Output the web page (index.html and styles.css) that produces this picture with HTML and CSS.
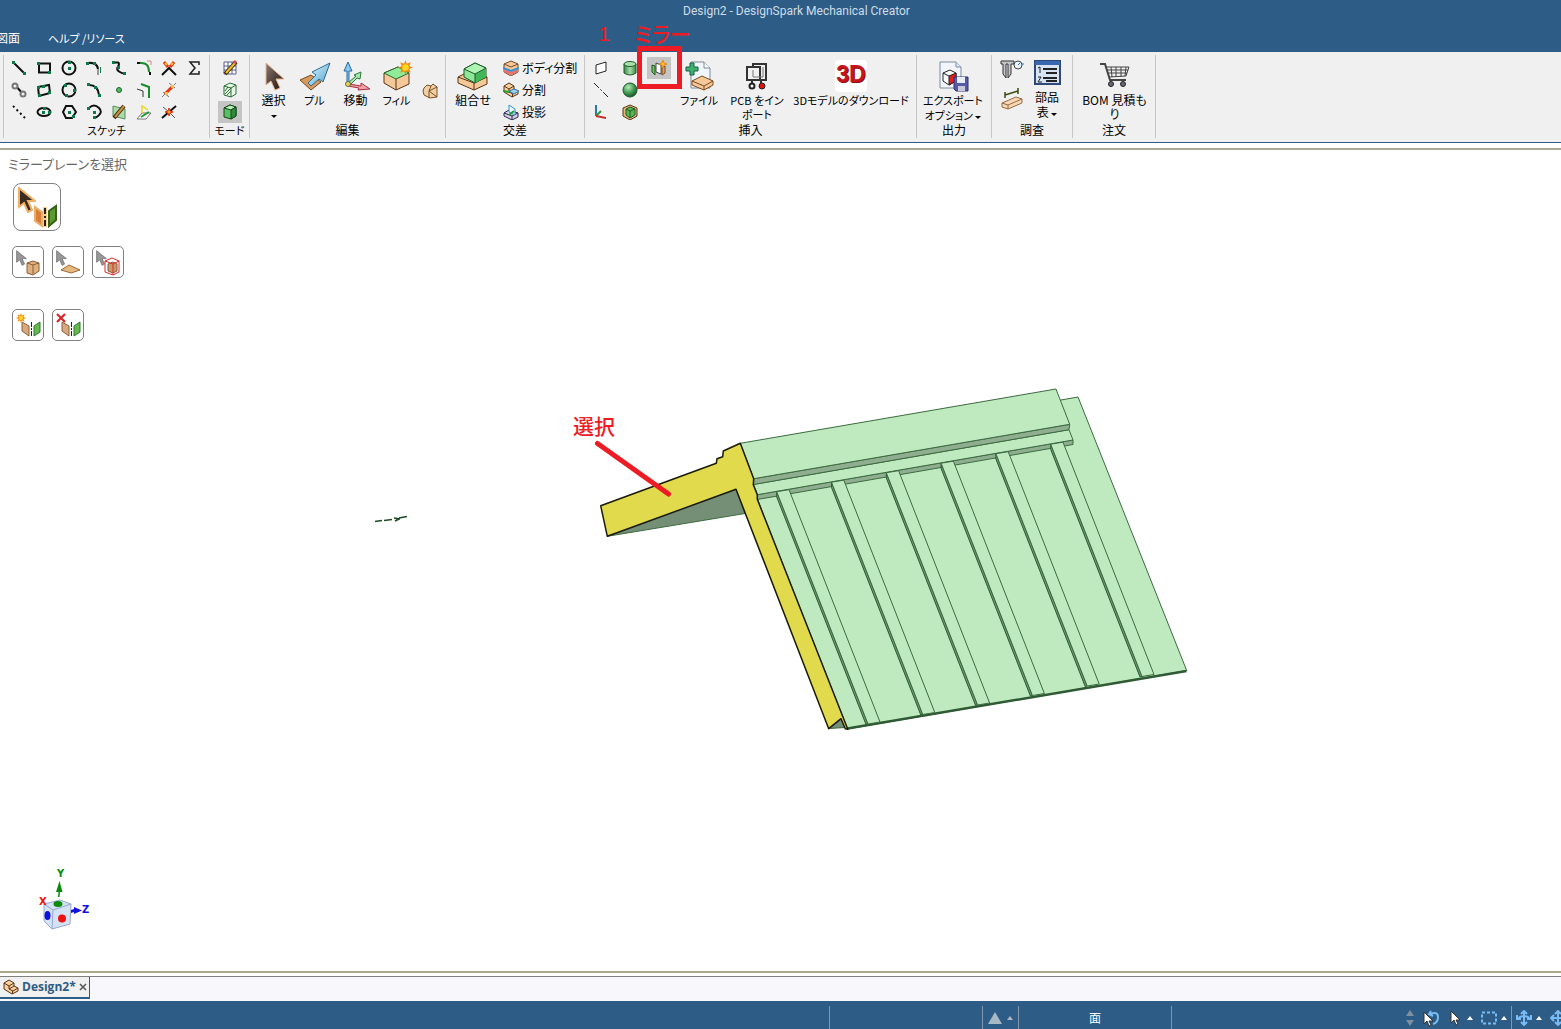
FILE: index.html
```html
<!DOCTYPE html>
<html lang="ja">
<head>
<meta charset="utf-8">
<title>Design2 - DesignSpark Mechanical Creator</title>
<link rel="stylesheet" href="styles.css">
</head>
<body>
<svg class="defs" aria-hidden="true">
  <defs>
    <linearGradient id="gArrow" x1="0" y1="0" x2="1" y2="1"><stop offset="0" stop-color="#8a7c74"/><stop offset="1" stop-color="#1c0e08"/></linearGradient>
    <linearGradient id="gBlue" x1="0" y1="0" x2="1" y2="1"><stop offset="0" stop-color="#e8fbff"/><stop offset="1" stop-color="#4aa0d0"/></linearGradient>
    <radialGradient id="gBall" cx=".38" cy=".3" r=".7"><stop offset="0" stop-color="#b8eab8"/><stop offset=".6" stop-color="#3f9a52"/><stop offset="1" stop-color="#1d5a2c"/></radialGradient>
    <linearGradient id="gCyl"><stop offset="0" stop-color="#3a8a4a"/><stop offset=".5" stop-color="#a5dca8"/><stop offset="1" stop-color="#3a8a4a"/></linearGradient>
    <symbol id="sun" viewBox="0 0 14 14"><path d="M7 0l1.200 3.600L11.900 2l-1.400 3.600L14 7l-3.500 1.300 1.400 3.700-3.700-1.500L7 14l-1.300-3.500L2 12l1.500-3.700L0 7l3.500-1.400L2 2l3.700 1.600z" fill="#f08a10"/><circle cx="7" cy="7" r="3" fill="#ffd820"/></symbol>
    <symbol id="cursor" viewBox="0 0 18 26"><path d="M1 1v19l5-4 4 9 4-2-4-9h7z"/></symbol>
    <symbol id="step" viewBox="0 0 16 16"><path d="M1 4l5-3 5 3v3l4 2v3l-6 3-8-5z" fill="#f7cfa0" stroke="#5a3414"/><path d="M1 4l5 3 5-3M6 7v3l4 2 5-3M6 10l5-3M9.500 12v3" fill="none" stroke="#5a3414"/></symbol>
    <g id="rib"><path d="M776.700 491.700L868 724l-2 .5L776.700 497z" fill="#6b9a70" stroke="#2f5a34"/><path d="M776.700 491.700l12.300-2L880 722l-12 2z" fill="#bfeac0" stroke="#3c6a40"/></g>
  </defs>
</svg>

<header class="top">
  <h1 class="title">Design2 - DesignSpark Mechanical Creator</h1>
  <nav class="menu">
    <button type="button">図面</button>
    <button type="button" class="kana">ヘルプ /リソース</button>
  </nav>
</header>

<section class="ribbon" aria-label="リボン">
  <div class="group g-sketch">
    <div class="grid">
      <button type="button" aria-label="線"><svg viewBox="0 0 16 16"><path class="k" d="M3 3l11 11"/><path class="nd" d="M1 1h3v3H1zM12 12h3v3h-3z"/></svg></button>
      <button type="button" aria-label="長方形"><svg viewBox="0 0 16 16"><path class="k" d="M3 3.500h11v9H3z"/><path class="nd" d="M1 2h3v3H1zM12 11h3v3h-3z"/></svg></button>
      <button type="button" aria-label="円"><svg viewBox="0 0 16 16"><circle class="k" cx="8" cy="8" r="6.500"/><path class="nd" d="M7 7h3v3H7zM7 1h3v3H7z"/></svg></button>
      <button type="button" aria-label="接線円弧"><svg viewBox="0 0 16 16"><path class="k" d="M2 3q9-1 10 6"/><path d="M12 9v6" stroke="#999" stroke-width="2"/><path class="nd" d="M0 2h3v3H0zM7 2h3v3H7zM14 7h1v6h-1z"/></svg></button>
      <button type="button" aria-label="スプライン"><svg viewBox="0 0 16 16"><path class="k" d="M2 2.500h5q2 1 0 4t1 5 6 2"/><path class="nd" d="M1 1h3v3H1zM6 6h3v3H6zM12 12h3v3h-3z"/></svg></button>
      <button type="button" aria-label="丸み"><svg viewBox="0 0 16 16"><path d="M4 3q9-1 9 9" fill="none" stroke="#1a8a2a" stroke-width="2"/><path class="k" d="M1 3h3M14 12v3"/><path d="M11 1h4v4" fill="none" stroke="#c88"/></svg></button>
      <button type="button" aria-label="トリム"><svg viewBox="0 0 16 16"><path class="k" d="M1 15L8 8l7 7"/><path d="M3 2l4 5M13 2L9 7" stroke="#e83010" stroke-width="3"/><path d="M4 3l2 2M12 3l-2 2" stroke="#ffc030" stroke-width="2"/></svg></button>
      <button type="button" aria-label="方程式"><svg viewBox="0 0 16 16"><path d="M13 5V2H4l5 6-5 6h9v-3" fill="none" stroke="#222" stroke-width="1.500"/></svg></button>

      <button type="button" aria-label="接線"><svg viewBox="0 0 16 16"><path class="k" d="M5 4l6 7"/><circle class="gr" cx="4" cy="4" r="2.500"/><circle class="gr" cx="12" cy="12" r="2.500"/></svg></button>
      <button type="button" aria-label="三点長方形"><svg viewBox="0 0 16 16"><path class="k" d="M2 5l11-2 1 8-11 3z"/><path class="nd" d="M1 4h3v3H1zM6 3h3v3H6zM12 9h3v3h-3zM2 12h3v3H2z"/></svg></button>
      <button type="button" aria-label="三点円"><svg viewBox="0 0 16 16"><circle class="k" cx="8" cy="8" r="6.500"/><path class="nd" d="M3 2h3v3H3zM12 7h3v3h-3zM4 12h3v3H4z"/></svg></button>
      <button type="button" aria-label="三点円弧"><svg viewBox="0 0 16 16"><path class="k" d="M3 3q9 0 10 10"/><path class="nd" d="M1 1h3v3H1zM8 4h3v3H8zM12 12h3v3h-3z"/></svg></button>
      <button type="button" aria-label="点"><svg viewBox="0 0 16 16"><circle cx="8" cy="8" r="2.500" fill="#58b868" stroke="#186828"/></svg></button>
      <button type="button" aria-label="オフセット"><svg viewBox="0 0 16 16"><path d="M5 2l8 3v11" fill="none" stroke="#1a8a2a" stroke-width="2"/><path d="M1 7l6 2v6" fill="none" stroke="#333"/></svg></button>
      <button type="button" aria-label="分割"><svg viewBox="0 0 16 16"><path d="M1 15L15 1M2 10l6 5M8 1l6 5" stroke="#777" fill="none"/><path d="M4 12l8-8" stroke="#e83010" stroke-width="3"/><path d="M4 10h3v3H4zM10 3h3v3h-3z" fill="#ffc030"/></svg></button>
      <span></span>

      <button type="button" aria-label="構築線"><svg viewBox="0 0 16 16"><path class="k" stroke-dasharray="2 3" d="M2 2l13 13"/></svg></button>
      <button type="button" aria-label="楕円"><svg viewBox="0 0 16 16"><ellipse class="k" cx="8" cy="8" rx="6.500" ry="4"/><path class="nd" d="M6 7h3v3H6zM7 3h3v3H7zM12 7h3v3h-3z"/></svg></button>
      <button type="button" aria-label="多角形"><svg viewBox="0 0 16 16"><path class="k" d="M5 2h6l4 6-4 6H5L2 8z"/><path class="nd" d="M7 7h3v3H7zM11 11h3v3h-3z"/></svg></button>
      <button type="button" aria-label="スイープ円弧"><svg viewBox="0 0 16 16"><path class="k" d="M3 4q5-5 10 0t-4 10"/><path class="nd" d="M1 3h3v3H1zM7 7h3v3H7zM7 12h3v3H7z"/></svg></button>
      <button type="button" aria-label="面の曲線"><svg viewBox="0 0 16 16"><path d="M2 2l12 3v10L2 12z" fill="#a8dca8" stroke="#5a8a5a"/><path d="M3 14L13 2" stroke="#4a2c10" stroke-width="4"/><path d="M4 13l9-11" stroke="#c89040" stroke-width="2"/></svg></button>
      <button type="button" aria-label="投影"><svg viewBox="0 0 16 16"><path d="M1 15l5-6h9l-5 6z" fill="#fff" stroke="#777"/><path d="M6 9V2l6 4" fill="none" stroke="#e8d820" stroke-width="1.500"/><path d="M5 13l8-5" stroke="#1a9a2a" stroke-width="2"/></svg></button>
      <button type="button" aria-label="コーナー"><svg viewBox="0 0 16 16"><path class="k" d="M1 14l7-6 7-6"/><path d="M8 8l6 6M2 3l6 5" stroke="#555"/><path d="M8 4l1 3 3 1-3 1-1 3-1-3-3-1 3-1z" fill="#ffb020" stroke="#e83010"/></svg></button>
    </div>
    <h2 class="kana">スケッチ</h2>
  </div>

  <div class="group g-mode">
    <div class="stack">
      <button type="button" aria-label="スケッチモード"><svg viewBox="0 0 16 16"><path d="M2 2h12v12H2zM2 6h12M2 10h12M6 2v12M10 2v12" fill="#fff" stroke="#56608a"/><path d="M3 14L14 2" stroke="#4a2c10" stroke-width="4"/><path d="M4 13l9-10" stroke="#f0c020" stroke-width="2"/><path d="M12 3l2-2" stroke="#d05050" stroke-width="3"/></svg></button>
      <button type="button" aria-label="断面モード"><svg viewBox="0 0 16 16"><path d="M2 4l6-3 6 2v9l-5 3-7-2z" fill="#e8f8e8" stroke="#2a6a34"/><path d="M2 4l7 2 5-3M9 6v9M3 9l3-4M3 12l6-6M5 13l4-4" fill="none" stroke="#2a6a34"/></svg></button>
      <button type="button" class="on" aria-label="3Dモード"><svg viewBox="0 0 16 16"><path d="M2 4l6-3 6 2v9l-5 3-7-2z" fill="#58c060" stroke="#16441c"/><path d="M2 4l6-3 6 2-5 3z" fill="#b8f0b8" stroke="#16441c"/><path d="M9 6l5-3v9l-5 3z" fill="#2f8a3c" stroke="#16441c"/></svg></button>
    </div>
    <h2 class="kana">モード</h2>
  </div>

  <div class="group g-edit">
    <div class="row">
      <button type="button" class="big"><svg viewBox="0 0 32 32"><path d="M8 3v22l5-4 4 9 5-2-4-9h8z" fill="url(#gArrow)" stroke="#e4b48c"/></svg>選択<i class="caret"></i></button>
      <button type="button" class="big kana"><svg viewBox="0 0 32 32"><path d="M1 20l11-5 10 7-10 8z" fill="#d89a5c" stroke="#7a4a20"/><path d="M31 3l-7 19-4-3-8 7-3-3 8-8-4-3z" fill="url(#gBlue)" stroke="#2c6a98"/></svg>プル</button>
      <button type="button" class="big"><svg viewBox="0 0 32 32"><path d="M7 24V11H4l4-9 4 9H9v13z" fill="#8ac8f0" stroke="#2868a0"/><path d="M8 23l8-7-2-1 7-3-1 7-3-1-7 7z" fill="#a8e8b0" stroke="#2a7a3a"/><path d="M9 24l12 2v-3l9 6-12 1 1-2-11-2z" fill="#f0a0a8" stroke="#a83040"/><circle cx="8" cy="24" r="2.500" fill="#e8d850" stroke="#665"/></svg>移動</button>
      <button type="button" class="big kana"><svg viewBox="0 0 32 32"><path d="M3 13l14-6 11 6v11l-13 6-12-7z" fill="#f4c898" stroke="#5a3414"/><path d="M3 13l14-6 11 6-13 6z" fill="#90ec98" stroke="#2a6a34"/><path d="M15 19v11" stroke="#5a3414"/><use href="#sun" x="17" y="0" width="15" height="15"/></svg>フィル</button>
      <button type="button" class="mini" aria-label="結合"><svg viewBox="0 0 16 16"><path d="M2 5l3-3 4 1 2-2 4 3v10l-7 1-6-3-1-4z" fill="#f4cfa4" stroke="#7a5028"/><path d="M9 3L7 8l8-4M7 8v7M7 8l8 6" fill="none" stroke="#7a5028"/></svg></button>
    </div>
    <h2>編集</h2>
  </div>

  <div class="group g-cross">
    <div class="row">
      <button type="button" class="big"><svg viewBox="0 0 32 32"><path d="M1 17l8-4 21 4v7l-13 6-16-7z" fill="#f4c898" stroke="#5a3414"/><path d="M1 17l16 6 13-6M17 23v7" fill="none" stroke="#5a3414"/><path d="M7 9l11-6 11 5v9l-11 6-11-6z" fill="#8ce898" stroke="#1c5a28"/><path d="M18 14l11-6v9l-11 6z" fill="#40b858"/><path d="M7 9l11-6 11 5-11 6z" fill="#b0f4b4" stroke="#1c5a28"/><path d="M18 14v9" stroke="#1c5a28"/></svg>組合せ</button>
      <div class="lines">
        <button type="button"><svg viewBox="0 0 16 16"><path d="M1 4l7-3 7 3v8l-7 4-7-4z" fill="#f4c898" stroke="#7a4a20"/><path d="M1 4l7 3 7-3" fill="none" stroke="#7a4a20"/><path d="M1 9l7 3 7-3v3l-7 3-7-3z" fill="#e87070"/><path d="M0 8l8 3 8-3" fill="none" stroke="#3a90d0" stroke-width="2"/></svg>ボディ分割</button>
        <button type="button"><svg viewBox="0 0 16 16"><use href="#step" width="16" height="16"/><path d="M6 9l5-2 5 2-5 3z" fill="#9ad0f0" stroke="#3a78a8"/><path d="M0 9l6 1" stroke="#20a030" stroke-width="2"/></svg>分割</button>
        <button type="button"><svg viewBox="0 0 16 16"><path d="M1 9l5-3 9 3v4l-6 3-8-4z" fill="#d8d0e0" stroke="#282858"/><path d="M1 9l8 3 6-3M9 12v4" fill="none" stroke="#282858"/><path d="M6 1l6 4v6L6 8z" fill="#e8f8ff" stroke="#3a90d0"/><path d="M6 11l5-4" stroke="#20a030" stroke-width="2"/></svg>投影</button>
      </div>
    </div>
    <h2>交差</h2>
  </div>

  <div class="group g-insert">
    <div class="row">
      <div class="grid3">
        <button type="button" aria-label="平面"><svg viewBox="0 0 16 16"><path d="M3 5l10-3v9L3 14z" fill="#fff" stroke="#222"/></svg></button>
        <button type="button" aria-label="円柱"><svg viewBox="0 0 16 16"><path d="M2 4v9q6 4 12 0V4z" fill="url(#gCyl)" stroke="#1c5a28"/><ellipse cx="8" cy="4" rx="6" ry="2.500" fill="#a8e0a8" stroke="#1c5a28"/></svg></button>
        <div class="mirror">
          <button type="button" class="on" aria-label="ミラー"><svg viewBox="0 0 16 16"><path d="M1 5l3 1v9l-3-3z" fill="#78c058" stroke="#1c5a28"/><path d="M5 3l5 2v9l-5-2z" fill="#fff" stroke="#444"/><path d="M11 8l3-2v7l-3 2z" fill="#e0a060" stroke="#7a4a20"/><path d="M12 0l1 3 3 1-3 1-1 3-1-3-3-1 3-1z" fill="#ffc030" stroke="#f08a10"/></svg></button>
          <span class="callout"></span>
          <span class="note note-num">1</span>
          <span class="note note-name">ミラー</span>
        </div>
        <button type="button" aria-label="軸"><svg viewBox="0 0 16 16"><path d="M1 1l14 14" stroke="#222" stroke-dasharray="7 2 2 2"/></svg></button>
        <button type="button" aria-label="球"><svg viewBox="0 0 16 16"><circle cx="8" cy="8" r="7" fill="url(#gBall)" stroke="#1c5a28"/></svg></button>
        <span></span>
        <button type="button" aria-label="原点"><svg viewBox="0 0 16 16"><path d="M3 1v11" stroke="#2878b8" stroke-width="2"/><path d="M3 12l5-5" stroke="#2a9a3a" stroke-width="2"/><path d="M3 12l10 2" stroke="#c83030" stroke-width="2"/></svg></button>
        <button type="button" aria-label="シェル"><svg viewBox="0 0 16 16"><path d="M1 4l7-3 7 3v8l-7 4-7-4z" fill="#e8b878" stroke="#5a3414"/><path d="M4 5l4-2 5 2v6l-5 3-4-3z" fill="#58b850" stroke="#1c5a28"/><path d="M4 5l4 2 5-2M8 7v7" fill="none" stroke="#1c5a28"/></svg></button>
      </div>
      <button type="button" class="big kana"><svg viewBox="0 0 32 32"><path d="M8 2h13l6 6v20H8z" fill="#f2f6fc" stroke="#7a8898"/><path d="M21 2v6h6" fill="#fff" stroke="#7a8898"/><path d="M7 3h4v4h4v4h-4v4H7v-4H3V7h4z" fill="#40b070" stroke="#186040"/><path d="M9 21l10-5 11 5v4l-9 5-12-5z" fill="#f4c898" stroke="#7a4a20"/><path d="M9 21l12 5 9-5M21 26v4" fill="none" stroke="#7a4a20"/></svg>ファイル</button>
      <button type="button" class="big kana w-pcb"><svg viewBox="0 0 32 32"><path d="M12 20H6V7h13v13H10M12 7V4h13v16h-7M11 20v4M20 20v4" fill="none" stroke="#333" stroke-width="2"/><path d="M12 10v7h10V7" fill="none" stroke="#777"/><circle cx="11" cy="26" r="2.500" fill="#fff" stroke="#222" stroke-width="2"/><circle cx="21" cy="26" r="3" fill="#e01010" stroke="#222"/></svg>PCB をイン<br>ポート</button>
      <button type="button" class="big kana w-3d"><span class="logo3d" aria-hidden="true">3D</span>3Dモデルのダウンロード</button>
    </div>
    <h2>挿入</h2>
  </div>

  <div class="group g-out">
    <div class="row">
      <button type="button" class="big kana loose"><svg viewBox="0 0 32 32"><path d="M3 2h16l5 5v21H3z" fill="#f2f6fc" stroke="#7a8aa0"/><path d="M19 2v5h5" fill="#dfe8f4" stroke="#7a8aa0"/><path d="M6 13l7-3 6 3v8l-7 4-6-4z" fill="#fff" stroke="#222"/><path d="M12 16l7-3v8l-7 4z" fill="#e02020" stroke="#222"/><path d="M6 13l6 3" stroke="#222"/><path d="M17 17h14v14H19l-2-2z" fill="#5858a8" stroke="#303070"/><path d="M20 17h8v6h-8z" fill="#e8ecf8"/><path d="M21 26h7v5h-7z" fill="#c8c8d8"/></svg>エクスポート<br><span>オプション <i class="caret"></i></span></button>
    </div>
    <h2>出力</h2>
  </div>

  <div class="group g-inv">
    <div class="row">
      <div class="pair">
        <button type="button" aria-label="測定"><svg viewBox="0 0 24 24"><path d="M1 3h13v3h-3v10l-3 4V6H6v14l-3-4V6H1z" fill="#c4c8cc" stroke="#333"/><circle cx="18" cy="7" r="4" fill="#e8f4ff" stroke="#444"/><path d="M18 7l2-2M22 6h2" stroke="#2868c0"/></svg></button>
        <button type="button" aria-label="質量"><svg viewBox="0 0 24 24"><path d="M2 15l14-6 6 2v4L8 21l-6-2z" fill="#f4d8b8" stroke="#9a6a40"/><path d="M2 15l6 2 14-6M8 17v4" fill="none" stroke="#9a6a40"/><path d="M5 7l13-4M5 4v6M18 0v6" stroke="#3a4a10" stroke-width="1.500"/></svg></button>
      </div>
      <button type="button" class="big tall"><svg viewBox="0 0 28 28"><path d="M2 1h25v23H2z" fill="#d8e4f4" stroke="#304878" stroke-width="2"/><path d="M2 1h25v4H2z" fill="#3868b0"/><path d="M10 9h14M13 13h11M10 18h14M13 21h11" stroke="#222" stroke-width="2"/><path d="M5 8l2-1v6M5 17h3l-3 5h4" fill="none" stroke="#222"/></svg>部品<br><span>表 <i class="caret"></i></span></button>
    </div>
    <h2>調査</h2>
  </div>

  <div class="group g-order">
    <div class="row">
      <button type="button" class="big"><svg viewBox="0 0 32 32"><path d="M1 4h5l5 16h16" fill="none" stroke="#444" stroke-width="2"/><path d="M7 7h23l-3 9-17 1M8 10h21M9 13h19M12 7l1 10M17 7v10M22 7v10M27 7l-1 9" fill="none" stroke="#444"/><circle cx="12" cy="24" r="2.500" fill="#667" stroke="#222"/><circle cx="24" cy="24" r="2.500" fill="#667" stroke="#222"/></svg>BOM 見積も<br>り</button>
    </div>
    <h2>注文</h2>
  </div>
</section>

<main class="canvas">
  <p class="hint">ミラープレーンを選択</p>
  <div class="tools">
    <button type="button" class="tool large" aria-label="ミラー平面を選択"><svg viewBox="0 0 46 46"><use href="#cursor" x="4" y="3" width="18" height="26" fill="#3a2c20" stroke="#f0b068" stroke-width="2"/><path d="M21 23l7 5v14l-7-5z" fill="#d88038" stroke="#e8b070" stroke-width="2"/><path d="M42 22l-7 5v15l7-6z" fill="#5a9a30" stroke="#3a6018" stroke-width="2"/><path d="M31 23v20" stroke="#f8d090" stroke-width="4"/><path d="M31 24v19" stroke="#222" stroke-width="2" stroke-dasharray="6 2 2 2"/></svg></button>
  </div>
  <div class="tools">
    <button type="button" class="tool" aria-label="ボディを選択"><svg viewBox="0 0 30 30"><use href="#cursor" x="3" y="3" width="11" height="16" fill="#999" stroke="#555"/><path d="M14 16l6-2 6 2v8l-6 4-6-2z" fill="#e0b080" stroke="#8a6038"/><path d="M14 16l6 2 6-2M20 18v9" fill="none" stroke="#8a6038"/></svg></button>
    <button type="button" class="tool" aria-label="面を選択"><svg viewBox="0 0 30 30"><use href="#cursor" x="3" y="3" width="11" height="16" fill="#999" stroke="#555"/><path d="M8 23l8-5 11 5-9 3z" fill="#e8b880" stroke="#9a6a38"/></svg></button>
    <button type="button" class="tool" aria-label="フィーチャーを選択"><svg viewBox="0 0 30 30"><use href="#cursor" x="3" y="3" width="11" height="16" fill="#999" stroke="#555"/><path d="M15 17l5-2 4 2v7l-4 2-5-2z" fill="#c8986c" stroke="#8a6038"/><path d="M12 14l7-3 7 3v11l-6 3-8-3zM12 14l8 3 6-3M20 17v11" fill="none" stroke="#e02828"/></svg></button>
  </div>
  <div class="tools last">
    <button type="button" class="tool" aria-label="ミラーを作成"><svg viewBox="0 0 30 30"><use href="#sun" x="3" y="3" width="10" height="10"/><path d="M9 12l7 4v10l-7-5z" fill="#d8a880" stroke="#8a6038"/><path d="M27 12l-6 4v10l6-4z" fill="#68b850" stroke="#2a7a2a"/><path d="M18.500 12v15" stroke="#222" stroke-dasharray="5 1 2 1"/></svg></button>
    <button type="button" class="tool" aria-label="ミラーを削除"><svg viewBox="0 0 30 30"><path d="M4 4l8 8M12 4l-8 8" stroke="#d82020" stroke-width="2"/><path d="M9 12l7 4v10l-7-5z" fill="#d8a880" stroke="#8a6038"/><path d="M27 12l-6 4v10l6-4z" fill="#68b850" stroke="#2a7a2a"/><path d="M18.500 12v15" stroke="#222" stroke-dasharray="5 1 2 1"/></svg></button>
  </div>

  <svg class="model" viewBox="360 380 840 360" role="img" aria-label="屋根モデル">
    <path d="M375 521.500l7-1M384 520.500l8-1M394 518l6 1M395 521l4-2M399 518l8-1.500" stroke="#1c4a24" stroke-width="1.500" fill="none"/>
    <path d="M607.300 536.300L736 489l9 24.500z" fill="#758f77" stroke="#3c6a40"/>
    <path d="M757 498L1061 400l17-3 108.700 273.500L847.500 729z" fill="#bfeac0" stroke="#3c6a40"/>
    <path d="M847.500 728.500L1186.500 671" stroke="#2f5a34" stroke-width="2.500"/>
    <path d="M757.300 494.700L1073 440v4.500l-315.700 55z" fill="#8fae90" stroke="#3c6a40"/>
    <path d="M753.500 484.500L1069 429.700l4 10.300-315.700 54.700z" fill="#bfeac0" stroke="#3c6a40"/>
    <path d="M753.700 478.700l316-54.400-.7 5.400-315.500 54.800z" fill="#8fae90" stroke="#3c6a40"/>
    <path d="M740.300 443.300L1056 389l13.700 35.300-316 54.400z" fill="#bfeac0" stroke="#3c6a40"/>
    <use href="#rib"/>
    <use href="#rib" x="54.800" y="-9.500"/>
    <use href="#rib" x="109.600" y="-19"/>
    <use href="#rib" x="164.400" y="-28.500"/>
    <use href="#rib" x="219.200" y="-38"/>
    <use href="#rib" x="274" y="-47.500"/>
    <path d="M829 728.500l12-9.500 4.500 8.500z" fill="#758f77" stroke="#3c6a40"/>
    <path d="M600.700 505.700l115.600-42.400.7-4.600 5.700-2 .6-5.700 17-7.700 13.400 35.400-.4 6 4 10v4.600l90.500 230-2.500-.6-4.300-10-12.300 10L736 489.300l-128.700 47z" fill="#e0da4c" stroke="#1a1a08" stroke-width="1.500" stroke-linejoin="round"/>
    <path d="M597.500 443.500l71 50.500" stroke="#ed1c24" stroke-width="5" stroke-linecap="round"/>
  </svg>
  <span class="note note-pick">選択</span>

  <svg class="triad" viewBox="36 866 60 68" role="img" aria-label="座標軸">
    <path d="M44 904l16-4 11 4-1 20-18 5-8-8z" fill="#d4e2f6" stroke="#98a8d0"/>
    <path d="M44 904l9 6 18-6M53 910l-1 19" fill="none" stroke="#98a8d0"/>
    <ellipse cx="58" cy="904" rx="4.500" ry="3" fill="#0a8a0a"/>
    <ellipse cx="47.500" cy="915.500" rx="3" ry="4.500" fill="#1010e0"/>
    <circle cx="62" cy="918.500" r="4" fill="#f01010"/>
    <path d="M58 897l.5-5H56l3.500-11 3 11H60l-.5 5z" fill="#0a8a0a"/>
    <path d="M71 910l3-1v-2l8 3.500-8 3.500v-2l-3 1z" fill="#1010e0"/>
    <text x="57" y="877" fill="#0a8a0a">Y</text>
    <text x="39" y="905" fill="#f01010">X</text>
    <text x="82" y="913" fill="#1010e0">Z</text>
  </svg>
</main>

<div class="tabs">
  <div class="tab"><svg viewBox="0 0 16 16" aria-hidden="true"><use href="#step" width="16" height="16"/></svg><span>Design2*</span><button type="button" aria-label="閉じる"><svg viewBox="0 0 8 8"><path d="M1 1l6 6M7 1L1 7" stroke="#555" stroke-width="1.500"/></svg></button></div>
</div>

<footer class="status">
  <div class="cell grow"></div>
  <div class="cell wide"></div>
  <div class="cell narrow"><svg class="warn" viewBox="0 0 14 12"><path d="M7 0l7 12H0z" fill="#a8b8c4"/></svg><i class="up dim"></i></div>
  <div class="cell wide">面</div>
  <div class="cell picks">
    <svg class="spin" viewBox="0 0 10 18"><path d="M5 1l4 6H1zM5 17l4-6H1z" fill="#7f90a0"/></svg>
    <svg class="s16" viewBox="0 0 16 16"><path d="M1 2v12l3-3 2 5 2-1-2-4h4z" fill="#fff" stroke="#333"/><path d="M8 1L6 4l4 2M7 4q8-3 8 3t-5 7" fill="none" stroke="#78baf4" stroke-width="2"/></svg>
    <span class="drop"><svg class="s16" viewBox="0 0 16 16"><path d="M4 1v12l3-3 2 5 2-1-2-4h4z" fill="#fff" stroke="#333"/></svg><i class="up"></i></span>
    <span class="drop"><svg class="s16" viewBox="0 0 16 16"><path d="M1 2.500h14v11H1z" fill="none" stroke="#78baf4" stroke-width="2" stroke-dasharray="3 2"/></svg><i class="up"></i></span>
  </div>
  <div class="cell nav">
    <span class="drop"><svg class="s16" viewBox="0 0 16 16"><path d="M8 1v13M1 9q7-6 14 0M5 4l3-3 3 3M5 12l3 3 3-3M1 5v4h4M15 5v4h-4" fill="none" stroke="#78baf4" stroke-width="2"/></svg><i class="up"></i></span>
    <svg class="s16" viewBox="0 0 16 16"><path d="M8 1v14M1 8h14M5 4l3-3 3 3M5 12l3 3 3-3M4 5L1 8l3 3" fill="none" stroke="#78baf4" stroke-width="2"/></svg>
  </div>
</footer>
</body>
</html>
```

FILE: styles.css
```css
* { box-sizing: border-box; }

body {
  margin: 0;
  min-height: 100vh;
  display: flex;
  flex-direction: column;
  overflow-x: hidden;
  background: #fff;
  color: #000;
  font: 12px/14px "Noto Sans CJK JP", sans-serif;
  font-feature-settings: "palt";
}

.defs { position: absolute; width: 0; height: 0; }

button {
  margin: 0;
  padding: 0;
  border: 0;
  background: none;
  color: inherit;
  font: inherit;
  font-feature-settings: inherit;
}

svg { display: block; flex: none; }

/* Title and menu */
.top { background: #2d5c86; color: #fff; height: 52px; }
.title {
  margin: 0;
  padding-left: 32px;
  font: 12px/22px Roboto, sans-serif;
  color: #cfdce8;
  text-align: center;
}
.menu { display: flex; gap: 28px; margin-left: -4px; line-height: 32px; }

/* Ribbon */
.ribbon {
  display: flex;
  height: 91px;
  padding: 3px 0 4px 3px;
  background: #f0f0f0;
  border-bottom: 1px solid #2d5c86;
}
.group {
  flex: none;
  display: flex;
  flex-direction: column;
  align-items: center;
  border-left: 1px solid #c6c6c6;
}
.group:last-child { border-right: 1px solid #c6c6c6; }
.group h2 { margin: 0; font-size: 12px; font-weight: 400; line-height: 16px; }
.group > div { height: 67px; }
.kana, .group h2.kana { font-size: 11px; }
.g-sketch { width: 206px; }
.g-mode { width: 40px; }
.g-edit { width: 196px; }
.g-cross { width: 139px; }
.g-insert { width: 332px; }
.g-out { width: 75px; }
.g-inv { width: 81px; }
.g-order { width: 84px; }

.grid, .grid3 { display: grid; grid-auto-rows: 22px; padding-top: 2px; }
.grid { grid-template-columns: repeat(8, 25px); }
.grid3 { grid-template-columns: repeat(3, 29px); }
.grid button, .grid3 button, .stack button {
  display: flex;
  align-items: center;
  justify-content: center;
}
.grid svg, .grid3 svg, .stack svg, .mini svg, .lines svg { width: 16px; height: 16px; }
.stack { padding-top: 2px; }
.stack button, .mirror button { width: 24px; height: 22px; }
.on { background: #c5c5c5; }
.k { fill: none; stroke: #111; stroke-width: 2; }
.nd { fill: #0a7a4a; }
.gr { fill: #f0f0f0; stroke: #777; stroke-width: 2; }

.row { display: flex; align-items: flex-start; align-self: stretch; }
.big {
  flex: none;
  width: 41px;
  padding-top: 5px;
  text-align: center;
  white-space: nowrap;
}
.big svg { width: 32px; height: 32px; margin: 0 auto 1px; }
.g-edit .row { padding-left: 3px; }
.g-cross .row { padding-left: 4px; }
.g-cross .big { width: 46px; }
.mini { margin: 28px 0 0 5px; }
.lines { padding-top: 2px; margin-left: 7px; }
.lines button { display: flex; align-items: center; gap: 3px; height: 22px; white-space: nowrap; }
.g-insert .row { padding-left: 1px; }
.g-insert .big { width: 52px; }
.g-insert .w-pcb { width: 64px; }
.g-insert .w-3d { width: 124px; }
.g-out .big { width: 72px; }
.loose, .big.tall { line-height: 15px; }
.pair { padding: 3px 0 0 8px; }
.pair button { display: block; }
.pair svg { width: 24px; height: 24px; margin-bottom: 6px; }
.g-inv .big { width: 46px; }
.tall svg { width: 28px; height: 28px; }
.g-order .big { width: 83px; }

.caret, .up {
  display: inline-block;
  width: 0;
  height: 0;
  border: 3px solid transparent;
}
.caret { border-top-color: #000; border-bottom: 0; vertical-align: 1px; }
.big > .caret { display: block; margin: 8px auto 0; }
.up { flex: none; border-bottom: 4px solid #fff; border-top: 0; }
.dim { border-bottom-color: #a8b8c4; }

.logo3d {
  display: block;
  width: 32px;
  height: 32px;
  margin: 0 auto 1px;
  border-radius: 4px;
  background: #fff;
  color: #c8141c;
  font: bold 23px/28px "Liberation Sans", sans-serif;
  text-shadow: 1px 1px 0 #8a0c10;
}

/* Red mark-up */
.mirror { position: relative; justify-self: center; }
.callout {
  position: absolute;
  left: -10px;
  top: -11px;
  width: 45px;
  height: 43px;
  border: 5px solid #ed1c24;
}
.note {
  position: absolute;
  color: #ed1c24;
  font-size: 21px;
  font-weight: 500;
  line-height: 24px;
  white-space: nowrap;
}
.note-num { left: -48px; top: -35px; font-family: "Liberation Sans", sans-serif; }
.note-name { left: -12px; top: -36px; }
.note-pick { left: 573px; top: 263px; }

/* Drawing area */
.canvas {
  position: relative;
  flex: 1;
  min-height: 600px;
  margin-top: 5px;
  padding: 7px 8px 0;
  border-top: 2px solid #aca899;
  border-bottom: 2px solid #aca68a;
  overflow: hidden;
}
.hint { margin: 0 0 12px; color: #666; font-size: 13px; line-height: 14px; }
.tools { display: flex; gap: 8px; padding-left: 4px; margin-bottom: 15px; }
.tools.last { margin-top: 31px; }
.tool {
  width: 32px;
  height: 32px;
  border: 1px solid #808080;
  border-radius: 5px;
  background: #fff;
}
.tool svg { width: 30px; height: 30px; }
.large { width: 48px; height: 48px; margin-left: 1px; border-radius: 8px; }
.large svg { width: 46px; height: 46px; }
.model { position: absolute; left: 360px; top: 230px; width: 840px; height: 360px; }
.triad { position: absolute; left: 36px; bottom: 37px; width: 60px; height: 68px; }
.triad text { font: bold 10px "DejaVu Sans", sans-serif; }

/* Document tabs */
.tabs {
  height: 25px;
  margin-top: 3px;
  background: #f7f7fc;
  border-top: 1px solid #808080;
}
.tab {
  display: flex;
  align-items: center;
  gap: 3px;
  width: 90px;
  height: 22px;
  padding-left: 3px;
  background: #f0f0f0;
  border: solid #2d5c86;
  border-width: 0 1px 2px 0;
  color: #2d5c86;
  font: bold 12px/20px "Open Sans", sans-serif;
}
.tab > svg { width: 16px; height: 16px; }
.tab button svg { width: 8px; height: 8px; }

/* Status bar */
.status {
  display: flex;
  height: 28px;
  padding-top: 5px;
  background: #2d5c86;
  color: #fff;
  overflow: hidden;
}
.cell {
  flex: none;
  display: flex;
  align-items: center;
  justify-content: center;
  border-right: 1px solid #8097ae;
}
.grow { flex: 1; }
.wide { width: 153px; }
.narrow { width: 36px; gap: 5px; }
.warn { width: 14px; height: 12px; }
.spin { width: 10px; height: 18px; }
.s16 { width: 16px; height: 16px; }
.drop { display: flex; align-items: center; gap: 4px; }
.picks { width: 340px; justify-content: flex-end; gap: 8px; padding-right: 4px; }
.nav { width: 49px; justify-content: flex-start; gap: 8px; padding-left: 4px; border: 0; }
```
